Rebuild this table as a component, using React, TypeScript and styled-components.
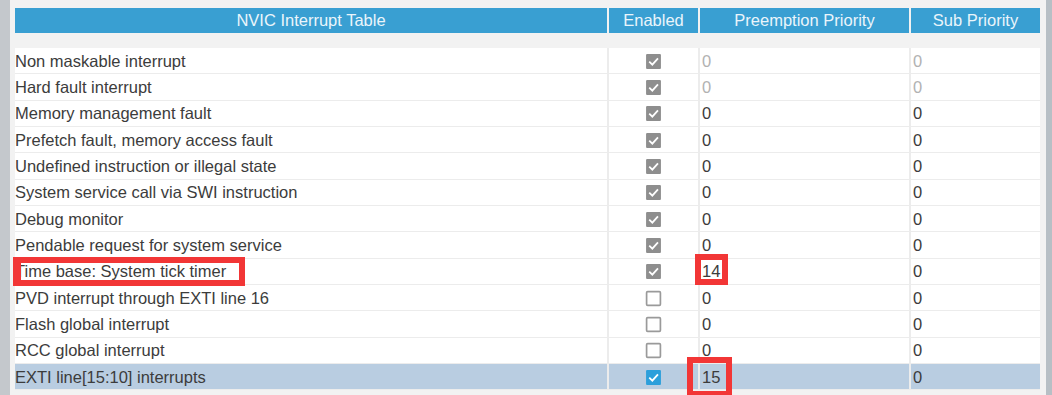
import styled, { createGlobalStyle } from 'styled-components';

type Row = {
  name: string;
  enabled: boolean;
  preempt: string;
  sub: string;
  muted?: boolean;
  selected?: boolean;
};

const rows: Row[] = [
  { name: 'Non maskable interrupt', enabled: true, preempt: '0', sub: '0', muted: true },
  { name: 'Hard fault interrupt', enabled: true, preempt: '0', sub: '0', muted: true },
  { name: 'Memory management fault', enabled: true, preempt: '0', sub: '0' },
  { name: 'Prefetch fault, memory access fault', enabled: true, preempt: '0', sub: '0' },
  { name: 'Undefined instruction or illegal state', enabled: true, preempt: '0', sub: '0' },
  { name: 'System service call via SWI instruction', enabled: true, preempt: '0', sub: '0' },
  { name: 'Debug monitor', enabled: true, preempt: '0', sub: '0' },
  { name: 'Pendable request for system service', enabled: true, preempt: '0', sub: '0' },
  { name: 'Time base: System tick timer', enabled: true, preempt: '14', sub: '0' },
  { name: 'PVD interrupt through EXTI line 16', enabled: false, preempt: '0', sub: '0' },
  { name: 'Flash global interrupt', enabled: false, preempt: '0', sub: '0' },
  { name: 'RCC global interrupt', enabled: false, preempt: '0', sub: '0' },
  { name: 'EXTI line[15:10] interrupts', enabled: true, preempt: '15', sub: '0', selected: true },
];

const Global = createGlobalStyle`
  html, body { margin: 0; padding: 0; background: #f1f1f1; }
  body { font-family: 'Liberation Sans', Arial, sans-serif; }
`;

const Page = styled.div`
  position: relative;
  display: flex;
  width: 1052px;
  height: 395px;
  overflow: hidden;
  background: #f2f2f2;
`;

const SideStrip = styled.div<{ $w: number; $c: string }>`
  width: ${p => p.$w}px;
  flex: none;
  background: ${p => p.$c};
`;

const Content = styled.div`
  flex: 1;
  padding: 8px 6px 0 5px;
`;

const COLS = '594px 91px 211px 1fr';

const HeaderRow = styled.div`
  display: grid;
  grid-template-columns: ${COLS};
  height: 25px;
  margin-bottom: 15px;
`;

const HeaderCell = styled.div`
  background: #399fd2;
  color: #eaf5fb;
  font-size: 16.5px;
  display: flex;
  align-items: center;
  justify-content: center;
  margin-right: 2px;
  &:last-child { margin-right: 0; }
`;

const Body = styled.div`
  display: flex;
  flex-direction: column;
  background: #fff;
`;

const TableRow = styled.div<{ $selected?: boolean }>`
  display: grid;
  grid-template-columns: ${COLS};
  height: 26.35px;
  box-sizing: border-box;
  border-bottom: 1px solid #ececec;
  background: ${p => (p.$selected ? '#b9cde1' : '#fff')};
`;

const Cell = styled.div<{ $muted?: boolean; $center?: boolean }>`
  display: flex;
  align-items: center;
  justify-content: ${p => (p.$center ? 'center' : 'flex-start')};
  padding-left: ${p => (p.$center ? 0 : 2)}px;
  padding-top: 1px;
  font-size: 16.5px;
  color: ${p => (p.$muted ? '#b2b2b2' : '#3c3c3c')};
  border-right: 2px solid #ececec;
  white-space: nowrap;
  &:first-child { padding-left: 0; }
  &:last-child { border-right: none; }
`;

const Mark = styled.div`
  position: absolute;
  border: 6px solid #f23636;
  box-sizing: border-box;
`;

function Check({ on, blue }: { on: boolean; blue?: boolean }) {
  if (!on) {
    return (
      <svg width="17" height="17" viewBox="0 0 16 16">
        <rect x="1.5" y="1.5" width="13" height="13" rx="1" fill="#fff" stroke="#9a9a9a" strokeWidth="1.6" />
      </svg>
    );
  }
  return (
    <svg width="17" height="17" viewBox="0 0 16 16">
      <rect x="1" y="1" width="14" height="14" rx="1" fill={blue ? '#2c9fdb' : '#8e8e8e'} />
      <path d="M4 8.2 L6.9 11 L12.2 5" fill="none" stroke="#fff" strokeWidth="1.7" />
    </svg>
  );
}

export default function App() {
  return (
    <>
      <Global />
      <Page>
        <SideStrip $w={10} $c="#c4c8cc" />
        <Content>
          <HeaderRow>
            <HeaderCell>NVIC Interrupt Table</HeaderCell>
            <HeaderCell>Enabled</HeaderCell>
            <HeaderCell>Preemption Priority</HeaderCell>
            <HeaderCell>Sub Priority</HeaderCell>
          </HeaderRow>
          <Body>
            {rows.map(r => (
              <TableRow key={r.name} $selected={r.selected}>
                <Cell>{r.name}</Cell>
                <Cell $center><Check on={r.enabled} blue={r.selected} /></Cell>
                <Cell $muted={r.muted}>{r.preempt}</Cell>
                <Cell $muted={r.muted}>{r.sub}</Cell>
              </TableRow>
            ))}
          </Body>
        </Content>
        <SideStrip $w={6} $c="#b7bfc5" />
        <Mark style={{ left: 13, top: 257, width: 232, height: 29, borderLeftWidth: 8 }} />
        <Mark style={{ left: 695, top: 254, width: 33, height: 31 }} />
        <Mark style={{ left: 687, top: 357, width: 45, height: 40 }} />
      </Page>
    </>
  );
}
